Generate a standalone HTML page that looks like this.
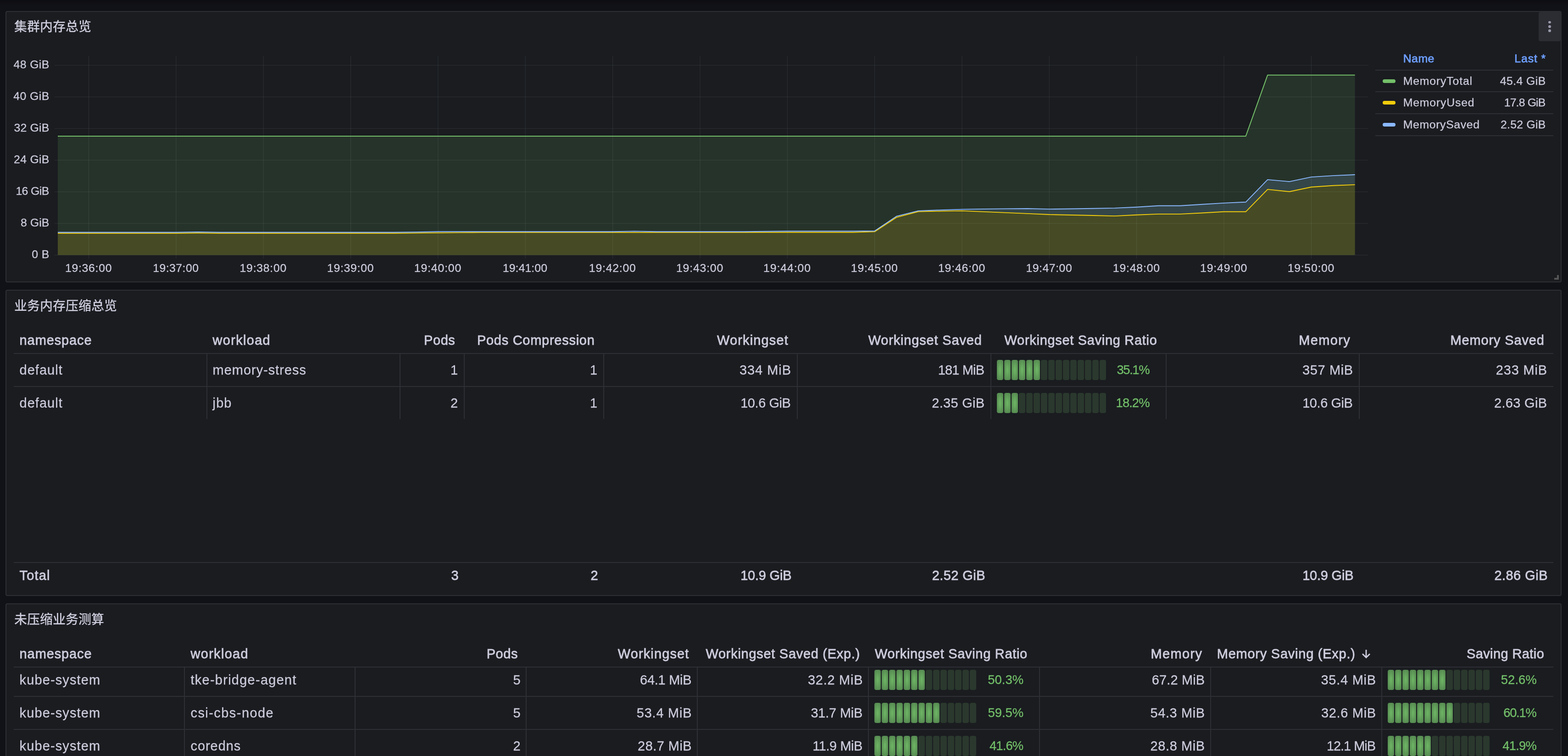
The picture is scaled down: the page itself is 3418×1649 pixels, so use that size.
<!DOCTYPE html><html lang="zh"><head><meta charset="utf-8"><title>Memory compression dashboard</title><style>
html,body{margin:0;padding:0}
body{width:3418px;height:1649px;overflow:hidden;background:#111217;font-family:"Liberation Sans",sans-serif;color:#ccccdc;position:relative}
body:before{content:"";position:absolute;left:0;top:0;width:100%;height:12px;background:linear-gradient(#0d0d12,#111217)}
.panel{position:absolute;box-sizing:border-box;background:#1a1c20;border-radius:4px;box-shadow:inset 0 0 0 2px #2d2f35;overflow:hidden;margin:0;will-change:transform}
.t{position:absolute;white-space:pre;margin:0;font-weight:400;-webkit-text-stroke:.3px currentColor}
.m{-webkit-text-stroke:.8px currentColor}
.ttl{position:absolute;margin:0;padding:0;font-size:28px;font-weight:500}
.ttl svg{display:block}
.chart{position:absolute;left:0;top:0}
.hl,.vl{position:absolute;background:#2d2f35}
.menu{position:absolute;border:0;padding:0;margin:0;background:#2b2d33;border-radius:4px 2px 4px 4px}
.menu i{position:absolute;left:21.2px;width:5.6px;height:5.6px;border-radius:50%;background:#9a9aab}
.sw{position:absolute;width:28px;height:8px;border-radius:4px}
.g{position:absolute;height:44px;display:flex;gap:2px}
.g i{display:block;width:14px;height:44px;border-radius:4px;background:rgba(115,191,105,.18)}
.g i.on{background:radial-gradient(rgba(115,191,105,.92) 10%,rgba(115,191,105,.6))}
</style></head><body>
<section class="panel" style="left:12px;top:24px;width:3392px;height:592px">
<h2 class="ttl" style="left:18.5px;top:19px;width:168px;height:34px" aria-label="集群内存总览"><svg width="168" height="34" viewBox="0 0 168 34" role="img"><title>集群内存总览</title><text x="0" y="25" font-family="'Liberation Sans','Noto Sans CJK SC',sans-serif" font-size="28" font-weight="500" fill="#ccccdc">集群内存总览</text></svg></h2>
<svg class="chart" width="3392" height="592" viewBox="12 24 3392 592" role="img" aria-label="Cluster memory time series"><polygon fill="#73bf69" fill-opacity=".14" points="126.0,297.0 145.9,297.0 193.5,297.0 241.1,297.0 288.7,297.0 336.3,297.0 383.9,297.0 431.4,297.0 479.0,297.0 526.6,297.0 574.2,297.0 621.8,297.0 669.4,297.0 717.0,297.0 764.5,297.0 812.1,297.0 859.7,297.0 907.3,297.0 954.9,297.0 1002.5,297.0 1050.1,297.0 1097.7,297.0 1145.2,297.0 1192.8,297.0 1240.4,297.0 1288.0,297.0 1335.6,297.0 1383.2,297.0 1430.8,297.0 1478.4,297.0 1526.0,297.0 1573.5,297.0 1621.1,297.0 1668.7,297.0 1716.3,297.0 1763.9,297.0 1811.5,297.0 1859.1,297.0 1906.6,297.0 1954.2,297.0 2001.8,297.0 2049.4,297.0 2097.0,297.0 2144.6,297.0 2192.2,297.0 2239.8,297.0 2287.3,297.0 2334.9,297.0 2382.5,297.0 2430.1,297.0 2477.7,297.0 2525.3,297.0 2572.9,297.0 2620.5,297.0 2668.0,297.0 2715.6,297.0 2763.2,163.7 2810.8,163.7 2858.4,163.7 2906.0,163.7 2953.6,163.7 2953.6,556.3 126.0,556.3"/><polygon fill="#f2cc0c" fill-opacity=".155" points="126.0,508.7 145.9,508.7 193.5,508.7 241.1,508.7 288.7,508.7 336.3,508.7 383.9,508.7 431.4,508.2 479.0,508.7 526.6,508.7 574.2,508.7 621.8,508.7 669.4,508.7 717.0,508.7 764.5,508.7 812.1,508.7 859.7,508.7 907.3,508.4 954.9,507.9 1002.5,507.4 1050.1,507.1 1097.7,507.1 1145.2,507.1 1192.8,507.1 1240.4,507.1 1288.0,507.1 1335.6,507.1 1383.2,507.1 1430.8,507.1 1478.4,507.1 1526.0,507.1 1573.5,507.1 1621.1,507.1 1668.7,506.9 1716.3,506.7 1763.9,506.7 1811.5,506.7 1859.1,506.7 1906.6,505.4 1954.2,474.1 2001.8,461.5 2049.4,460.6 2097.0,459.9 2144.6,461.9 2192.2,463.9 2239.8,465.9 2287.3,468.0 2334.9,469.0 2382.5,470.0 2430.1,471.1 2477.7,468.8 2525.3,466.9 2572.9,466.9 2620.5,464.5 2668.0,461.8 2715.6,461.8 2763.2,413.1 2810.8,418.0 2858.4,408.0 2906.0,404.7 2953.6,402.9 2953.6,556.3 126.0,556.3"/><polygon fill="#8ab8ff" fill-opacity=".145" points="126.0,506.8 145.9,506.8 193.5,506.8 241.1,506.8 288.7,506.8 336.3,506.8 383.9,506.8 431.4,506.0 479.0,506.8 526.6,506.8 574.2,506.8 621.8,506.8 669.4,506.8 717.0,506.8 764.5,506.8 812.1,506.8 859.7,506.8 907.3,506.2 954.9,505.2 1002.5,505.2 1050.1,505.2 1097.7,505.2 1145.2,505.2 1192.8,505.2 1240.4,505.2 1288.0,505.2 1335.6,505.2 1383.2,504.4 1430.8,505.2 1478.4,505.2 1526.0,505.2 1573.5,505.2 1621.1,505.2 1668.7,504.7 1716.3,504.3 1763.9,504.3 1811.5,504.3 1859.1,504.3 1906.6,503.7 1954.2,471.7 2001.8,459.9 2049.4,458.2 2097.0,456.6 2144.6,455.9 2192.2,455.4 2239.8,455.0 2287.3,456.1 2334.9,455.5 2382.5,454.7 2430.1,453.9 2477.7,451.8 2525.3,448.7 2572.9,448.7 2620.5,445.8 2668.0,442.9 2715.6,440.8 2763.2,391.9 2810.8,396.1 2858.4,386.1 2906.0,383.1 2953.6,381.0 2953.6,402.9 2906.0,404.7 2858.4,408.0 2810.8,418.0 2763.2,413.1 2715.6,461.8 2668.0,461.8 2620.5,464.5 2572.9,466.9 2525.3,466.9 2477.7,468.8 2430.1,471.1 2382.5,470.0 2334.9,469.0 2287.3,468.0 2239.8,465.9 2192.2,463.9 2144.6,461.9 2097.0,459.9 2049.4,460.6 2001.8,461.5 1954.2,474.1 1906.6,505.4 1859.1,506.7 1811.5,506.7 1763.9,506.7 1716.3,506.7 1668.7,506.9 1621.1,507.1 1573.5,507.1 1526.0,507.1 1478.4,507.1 1430.8,507.1 1383.2,507.1 1335.6,507.1 1288.0,507.1 1240.4,507.1 1192.8,507.1 1145.2,507.1 1097.7,507.1 1050.1,507.1 1002.5,507.4 954.9,507.9 907.3,508.4 859.7,508.7 812.1,508.7 764.5,508.7 717.0,508.7 669.4,508.7 621.8,508.7 574.2,508.7 526.6,508.7 479.0,508.7 431.4,508.2 383.9,508.7 336.3,508.7 288.7,508.7 241.1,508.7 193.5,508.7 145.9,508.7 126.0,508.7"/><path d="M118.4 142.3H2982.5M118.4 211.3H2982.5M118.4 280.3H2982.5M118.4 349.3H2982.5M118.4 418.3H2982.5M118.4 487.3H2982.5M118.4 556.3H2982.5M193.5 122.2V564.2M383.9 122.2V564.2M574.2 122.2V564.2M764.5 122.2V564.2M954.9 122.2V564.2M1145.2 122.2V564.2M1335.6 122.2V564.2M1526.0 122.2V564.2M1716.3 122.2V564.2M1906.6 122.2V564.2M2097.0 122.2V564.2M2287.3 122.2V564.2M2477.7 122.2V564.2M2668.0 122.2V564.2M2858.4 122.2V564.2" stroke="rgba(240,250,255,.09)" stroke-width="1" fill="none"/><polyline fill="none" stroke="#73bf69" stroke-width="2" stroke-linejoin="round" points="126.0,297.0 145.9,297.0 193.5,297.0 241.1,297.0 288.7,297.0 336.3,297.0 383.9,297.0 431.4,297.0 479.0,297.0 526.6,297.0 574.2,297.0 621.8,297.0 669.4,297.0 717.0,297.0 764.5,297.0 812.1,297.0 859.7,297.0 907.3,297.0 954.9,297.0 1002.5,297.0 1050.1,297.0 1097.7,297.0 1145.2,297.0 1192.8,297.0 1240.4,297.0 1288.0,297.0 1335.6,297.0 1383.2,297.0 1430.8,297.0 1478.4,297.0 1526.0,297.0 1573.5,297.0 1621.1,297.0 1668.7,297.0 1716.3,297.0 1763.9,297.0 1811.5,297.0 1859.1,297.0 1906.6,297.0 1954.2,297.0 2001.8,297.0 2049.4,297.0 2097.0,297.0 2144.6,297.0 2192.2,297.0 2239.8,297.0 2287.3,297.0 2334.9,297.0 2382.5,297.0 2430.1,297.0 2477.7,297.0 2525.3,297.0 2572.9,297.0 2620.5,297.0 2668.0,297.0 2715.6,297.0 2763.2,163.7 2810.8,163.7 2858.4,163.7 2906.0,163.7 2953.6,163.7"/><polyline fill="none" stroke="#f2cc0c" stroke-width="1.9" stroke-linejoin="round" points="126.0,508.7 145.9,508.7 193.5,508.7 241.1,508.7 288.7,508.7 336.3,508.7 383.9,508.7 431.4,508.2 479.0,508.7 526.6,508.7 574.2,508.7 621.8,508.7 669.4,508.7 717.0,508.7 764.5,508.7 812.1,508.7 859.7,508.7 907.3,508.4 954.9,507.9 1002.5,507.4 1050.1,507.1 1097.7,507.1 1145.2,507.1 1192.8,507.1 1240.4,507.1 1288.0,507.1 1335.6,507.1 1383.2,507.1 1430.8,507.1 1478.4,507.1 1526.0,507.1 1573.5,507.1 1621.1,507.1 1668.7,506.9 1716.3,506.7 1763.9,506.7 1811.5,506.7 1859.1,506.7 1906.6,505.4 1954.2,474.1 2001.8,461.5 2049.4,460.6 2097.0,459.9 2144.6,461.9 2192.2,463.9 2239.8,465.9 2287.3,468.0 2334.9,469.0 2382.5,470.0 2430.1,471.1 2477.7,468.8 2525.3,466.9 2572.9,466.9 2620.5,464.5 2668.0,461.8 2715.6,461.8 2763.2,413.1 2810.8,418.0 2858.4,408.0 2906.0,404.7 2953.6,402.9"/><polyline fill="none" stroke="#8ab8ff" stroke-width="1.9" stroke-linejoin="round" points="126.0,506.8 145.9,506.8 193.5,506.8 241.1,506.8 288.7,506.8 336.3,506.8 383.9,506.8 431.4,506.0 479.0,506.8 526.6,506.8 574.2,506.8 621.8,506.8 669.4,506.8 717.0,506.8 764.5,506.8 812.1,506.8 859.7,506.8 907.3,506.2 954.9,505.2 1002.5,505.2 1050.1,505.2 1097.7,505.2 1145.2,505.2 1192.8,505.2 1240.4,505.2 1288.0,505.2 1335.6,505.2 1383.2,504.4 1430.8,505.2 1478.4,505.2 1526.0,505.2 1573.5,505.2 1621.1,505.2 1668.7,504.7 1716.3,504.3 1763.9,504.3 1811.5,504.3 1859.1,504.3 1906.6,503.7 1954.2,471.7 2001.8,459.9 2049.4,458.2 2097.0,456.6 2144.6,455.9 2192.2,455.4 2239.8,455.0 2287.3,456.1 2334.9,455.5 2382.5,454.7 2430.1,453.9 2477.7,451.8 2525.3,448.7 2572.9,448.7 2620.5,445.8 2668.0,442.9 2715.6,440.8 2763.2,391.9 2810.8,396.1 2858.4,386.1 2906.0,383.1 2953.6,381.0"/></svg>
<button class="menu" aria-label="Menu" style="left:3342px;top:2px;width:48px;height:64px"><i style="top:19.7px"></i><i style="top:29.1px"></i><i style="top:38.4px"></i></button>
<span class="t" style="top:104.5px;font-size:24.84px;line-height:24.84px;letter-spacing:0.359px;left:17.6px;">48 GiB</span>
<span class="t" style="top:173.5px;font-size:24.84px;line-height:24.84px;letter-spacing:0.410px;left:17.3px;">40 GiB</span>
<span class="t" style="top:242.5px;font-size:24.84px;line-height:24.84px;letter-spacing:0.208px;left:18.4px;">32 GiB</span>
<span class="t" style="top:311.5px;font-size:24.84px;line-height:24.84px;letter-spacing:0.258px;left:18.1px;">24 GiB</span>
<span class="t" style="top:380.5px;font-size:24.84px;line-height:24.84px;letter-spacing:-0.610px;left:22.4px;">16 GiB</span>
<span class="t" style="top:449.5px;font-size:24.84px;line-height:24.84px;letter-spacing:0.028px;left:33.1px;">8 GiB</span>
<span class="t" style="top:518.5px;font-size:24.84px;line-height:24.84px;letter-spacing:0.355px;left:57.3px;">0 B</span>
<span class="t" style="top:549.0px;font-size:24.84px;line-height:24.84px;letter-spacing:0.719px;left:129.9px;">19:36:00</span>
<span class="t" style="top:549.0px;font-size:24.84px;line-height:24.84px;letter-spacing:0.445px;left:321.2px;">19:37:00</span>
<span class="t" style="top:549.0px;font-size:24.84px;line-height:24.84px;letter-spacing:0.715px;left:510.6px;">19:38:00</span>
<span class="t" style="top:549.0px;font-size:24.84px;line-height:24.84px;letter-spacing:0.719px;left:700.9px;">19:39:00</span>
<span class="t" style="top:549.0px;font-size:24.84px;line-height:24.84px;letter-spacing:0.841px;left:890.8px;">19:40:00</span>
<span class="t" style="top:549.0px;font-size:24.84px;line-height:24.84px;letter-spacing:0.081px;left:1083.8px;">19:41:00</span>
<span class="t" style="top:549.0px;font-size:24.84px;line-height:24.84px;letter-spacing:0.776px;left:1271.8px;">19:42:00</span>
<span class="t" style="top:549.0px;font-size:24.84px;line-height:24.84px;letter-spacing:0.800px;left:1462.0px;">19:43:00</span>
<span class="t" style="top:549.0px;font-size:24.84px;line-height:24.84px;letter-spacing:0.888px;left:1652.1px;">19:44:00</span>
<span class="t" style="top:549.0px;font-size:24.84px;line-height:24.84px;letter-spacing:0.770px;left:1842.8px;">19:45:00</span>
<span class="t" style="top:549.0px;font-size:24.84px;line-height:24.84px;letter-spacing:0.806px;left:2033.0px;">19:46:00</span>
<span class="t" style="top:549.0px;font-size:24.84px;line-height:24.84px;letter-spacing:0.532px;left:2224.4px;">19:47:00</span>
<span class="t" style="top:549.0px;font-size:24.84px;line-height:24.84px;letter-spacing:0.802px;left:2413.8px;">19:48:00</span>
<span class="t" style="top:549.0px;font-size:24.84px;line-height:24.84px;letter-spacing:0.806px;left:2604.1px;">19:49:00</span>
<span class="t" style="top:549.0px;font-size:24.84px;line-height:24.84px;letter-spacing:0.721px;left:2794.7px;">19:50:00</span>
<span class="t m" style="top:92.4px;font-size:24.84px;line-height:24.84px;letter-spacing:0.499px;left:3046.7px;color:#6e9fff;">Name</span>
<span class="t m" style="top:92.4px;font-size:24.84px;line-height:24.84px;letter-spacing:0.871px;left:3289.3px;color:#6e9fff;">Last *</span>
<span class="t" style="top:140.6px;font-size:24.84px;line-height:24.84px;letter-spacing:0.834px;left:3046.7px;">MemoryTotal</span>
<span class="t" style="top:140.6px;font-size:24.84px;line-height:24.84px;letter-spacing:0.436px;left:3257.7px;">45.4 GiB</span>
<span class="t" style="top:188.0px;font-size:24.84px;line-height:24.84px;letter-spacing:0.815px;left:3046.7px;">MemoryUsed</span>
<span class="t" style="top:188.0px;font-size:24.84px;line-height:24.84px;letter-spacing:-0.851px;left:3266.7px;">17.8 GiB</span>
<span class="t" style="top:235.7px;font-size:24.84px;line-height:24.84px;letter-spacing:0.635px;left:3046.7px;">MemorySaved</span>
<span class="t" style="top:235.7px;font-size:24.84px;line-height:24.84px;letter-spacing:0.257px;left:3259.0px;">2.52 GiB</span>
<div class="hl" style="left:2986.0px;top:127.9px;width:387.6px;height:2px"></div>
<div class="hl" style="left:2986.0px;top:174.7px;width:387.6px;height:2px"></div>
<div class="hl" style="left:2986.0px;top:222.6px;width:387.6px;height:2px"></div>
<div class="hl" style="left:2986.0px;top:271.0px;width:387.6px;height:2px"></div>
<i class="sw" style="left:3001.6px;top:149.0px;background:#73bf69"></i>
<i class="sw" style="left:3001.6px;top:196.4px;background:#f2cc0c"></i>
<i class="sw" style="left:3001.6px;top:244.1px;background:#8ab8ff"></i>
<svg style="position:absolute;left:3374px;top:574px" width="14" height="14" viewBox="3386 598 14 14" aria-hidden="true"><path d="M3394 600h4v10h-10v-4h6z" fill="#555"/></svg>
</section>
<section class="panel" style="left:12px;top:632px;width:3392px;height:668px">
<h2 class="ttl" style="left:18.5px;top:19.5px;width:224px;height:34px" aria-label="业务内存压缩总览"><svg width="224" height="34" viewBox="0 0 224 34" role="img"><title>业务内存压缩总览</title><text x="0" y="25" font-family="'Liberation Sans','Noto Sans CJK SC',sans-serif" font-size="28" font-weight="500" fill="#ccccdc">业务内存压缩总览</text></svg></h2>
<div class="hl" style="left:18.0px;top:138.0px;width:3356.0px;height:2px"></div>
<div class="hl" style="left:18.0px;top:210.0px;width:3356.0px;height:2px"></div>
<div class="hl" style="left:18.0px;top:593.6px;width:3356.0px;height:2px"></div>
<div class="vl" style="left:438.0px;top:140.0px;width:2px;height:142.0px"></div>
<div class="vl" style="left:859.0px;top:140.0px;width:2px;height:142.0px"></div>
<div class="vl" style="left:999.0px;top:140.0px;width:2px;height:142.0px"></div>
<div class="vl" style="left:1303.0px;top:140.0px;width:2px;height:142.0px"></div>
<div class="vl" style="left:1725.0px;top:140.0px;width:2px;height:142.0px"></div>
<div class="vl" style="left:2147.0px;top:140.0px;width:2px;height:142.0px"></div>
<div class="vl" style="left:2529.0px;top:140.0px;width:2px;height:142.0px"></div>
<div class="vl" style="left:2950.0px;top:140.0px;width:2px;height:142.0px"></div>
<div class="g" style="left:2161.0px;top:153.3px" role="meter"><i class="on"></i><i class="on"></i><i class="on"></i><i class="on"></i><i class="on"></i><i class="on"></i><i></i><i></i><i></i><i></i><i></i><i></i><i></i><i></i><i></i></div>
<div class="g" style="left:2161.0px;top:225.3px" role="meter"><i class="on"></i><i class="on"></i><i class="on"></i><i></i><i></i><i></i><i></i><i></i><i></i><i></i><i></i><i></i><i></i><i></i><i></i></div>
<span class="t m" style="top:95.7px;font-size:28.98px;line-height:28.98px;letter-spacing:0.906px;left:30.6px;">namespace</span>
<span class="t m" style="top:95.7px;font-size:28.98px;line-height:28.98px;letter-spacing:1.311px;left:451.6px;">workload</span>
<span class="t m" style="top:95.7px;font-size:28.98px;line-height:28.98px;letter-spacing:0.565px;left:912.1px;">Pods</span>
<span class="t m" style="top:95.7px;font-size:28.98px;line-height:28.98px;letter-spacing:0.746px;left:1027.9px;">Pods Compression</span>
<span class="t m" style="top:95.7px;font-size:28.98px;line-height:28.98px;letter-spacing:1.143px;left:1551.1px;">Workingset</span>
<span class="t m" style="top:95.7px;font-size:28.98px;line-height:28.98px;letter-spacing:0.836px;left:1880.7px;">Workingset Saved</span>
<span class="t m" style="top:95.7px;font-size:28.98px;line-height:28.98px;letter-spacing:0.707px;left:2177.6px;">Workingset Saving Ratio</span>
<span class="t m" style="top:95.7px;font-size:28.98px;line-height:28.98px;letter-spacing:1.388px;left:2819.2px;">Memory</span>
<span class="t m" style="top:95.7px;font-size:28.98px;line-height:28.98px;letter-spacing:0.856px;left:3149.6px;">Memory Saved</span>
<span class="t" style="top:160.9px;font-size:28.98px;line-height:28.98px;letter-spacing:1.021px;left:30.6px;">default</span>
<span class="t" style="top:160.9px;font-size:28.98px;line-height:28.98px;letter-spacing:0.994px;left:451.6px;">memory-stress</span>
<span class="t" style="top:160.9px;font-size:28.98px;line-height:28.98px;letter-spacing:-4.435px;left:969.9px;">1</span>
<span class="t" style="top:160.9px;font-size:28.98px;line-height:28.98px;letter-spacing:-4.435px;left:1273.9px;">1</span>
<span class="t" style="top:160.9px;font-size:28.98px;line-height:28.98px;letter-spacing:0.967px;left:1599.9px;">334 MiB</span>
<span class="t" style="top:160.9px;font-size:28.98px;line-height:28.98px;letter-spacing:-0.830px;left:2032.7px;">181 MiB</span>
<span class="t" style="top:160.8px;font-size:27.43px;line-height:27.43px;letter-spacing:-1.425px;left:2422.5px;color:#73bf69;">35.1%</span>
<span class="t" style="top:160.9px;font-size:28.98px;line-height:28.98px;letter-spacing:0.608px;left:2827.1px;">357 MiB</span>
<span class="t" style="top:160.9px;font-size:28.98px;line-height:28.98px;letter-spacing:0.822px;left:3248.8px;">233 MiB</span>
<span class="t" style="top:232.9px;font-size:28.98px;line-height:28.98px;letter-spacing:1.021px;left:30.6px;">default</span>
<span class="t" style="top:232.9px;font-size:28.98px;line-height:28.98px;letter-spacing:1.102px;left:451.6px;">jbb</span>
<span class="t" style="top:232.9px;font-size:28.98px;line-height:28.98px;letter-spacing:1.253px;left:969.9px;">2</span>
<span class="t" style="top:232.9px;font-size:28.98px;line-height:28.98px;letter-spacing:-4.435px;left:1273.9px;">1</span>
<span class="t" style="top:232.9px;font-size:28.98px;line-height:28.98px;letter-spacing:-0.425px;left:1602.2px;">10.6 GiB</span>
<span class="t" style="top:232.9px;font-size:28.98px;line-height:28.98px;letter-spacing:0.280px;left:2019.3px;">2.35 GiB</span>
<span class="t" style="top:232.8px;font-size:27.43px;line-height:27.43px;letter-spacing:-0.950px;left:2420.6px;color:#73bf69;">18.2%</span>
<span class="t" style="top:232.9px;font-size:28.98px;line-height:28.98px;letter-spacing:-0.425px;left:2827.2px;">10.6 GiB</span>
<span class="t" style="top:232.9px;font-size:28.98px;line-height:28.98px;letter-spacing:0.329px;left:3245.0px;">2.63 GiB</span>
<span class="t m" style="top:609.1px;font-size:28.98px;line-height:28.98px;letter-spacing:1.184px;left:30.6px;">Total</span>
<span class="t m" style="top:609.1px;font-size:28.98px;line-height:28.98px;letter-spacing:1.737px;left:971.4px;">3</span>
<span class="t m" style="top:609.1px;font-size:28.98px;line-height:28.98px;letter-spacing:1.440px;left:1275.4px;">2</span>
<span class="t m" style="top:609.1px;font-size:28.98px;line-height:28.98px;letter-spacing:-0.208px;left:1602.2px;">10.9 GiB</span>
<span class="t m" style="top:609.1px;font-size:28.98px;line-height:28.98px;letter-spacing:0.436px;left:2019.7px;">2.52 GiB</span>
<span class="t m" style="top:609.1px;font-size:28.98px;line-height:28.98px;letter-spacing:-0.208px;left:2827.2px;">10.9 GiB</span>
<span class="t m" style="top:609.1px;font-size:28.98px;line-height:28.98px;letter-spacing:0.479px;left:3245.4px;">2.86 GiB</span>
</section>
<section class="panel" style="left:12px;top:1316px;width:3392px;height:340px;border-radius:4px 4px 0 0">
<h2 class="ttl" style="left:18.5px;top:19.5px;width:196px;height:34px" aria-label="未压缩业务测算"><svg width="196" height="34" viewBox="0 0 196 34" role="img"><title>未压缩业务测算</title><text x="0" y="25" font-family="'Liberation Sans','Noto Sans CJK SC',sans-serif" font-size="28" font-weight="500" fill="#ccccdc">未压缩业务测算</text></svg></h2>
<div class="hl" style="left:18.0px;top:138.3px;width:3356.0px;height:2px"></div>
<div class="hl" style="left:18.0px;top:202.0px;width:3356.0px;height:2px"></div>
<div class="hl" style="left:18.0px;top:274.0px;width:3356.0px;height:2px"></div>
<div class="vl" style="left:388.5px;top:140.0px;width:2px;height:193.0px"></div>
<div class="vl" style="left:761.4px;top:140.0px;width:2px;height:193.0px"></div>
<div class="vl" style="left:1134.3px;top:140.0px;width:2px;height:193.0px"></div>
<div class="vl" style="left:1507.2px;top:140.0px;width:2px;height:193.0px"></div>
<div class="vl" style="left:1880.0px;top:140.0px;width:2px;height:193.0px"></div>
<div class="vl" style="left:2252.9px;top:140.0px;width:2px;height:193.0px"></div>
<div class="vl" style="left:2625.8px;top:140.0px;width:2px;height:193.0px"></div>
<div class="vl" style="left:2998.7px;top:140.0px;width:2px;height:193.0px"></div>
<div class="g" style="left:1894.4px;top:144.7px" role="meter"><i class="on"></i><i class="on"></i><i class="on"></i><i class="on"></i><i class="on"></i><i class="on"></i><i class="on"></i><i></i><i></i><i></i><i></i><i></i><i></i><i></i></div>
<div class="g" style="left:3013.1px;top:144.7px" role="meter"><i class="on"></i><i class="on"></i><i class="on"></i><i class="on"></i><i class="on"></i><i class="on"></i><i class="on"></i><i class="on"></i><i></i><i></i><i></i><i></i><i></i><i></i></div>
<div class="g" style="left:1894.4px;top:216.7px" role="meter"><i class="on"></i><i class="on"></i><i class="on"></i><i class="on"></i><i class="on"></i><i class="on"></i><i class="on"></i><i class="on"></i><i class="on"></i><i></i><i></i><i></i><i></i><i></i></div>
<div class="g" style="left:3013.1px;top:216.7px" role="meter"><i class="on"></i><i class="on"></i><i class="on"></i><i class="on"></i><i class="on"></i><i class="on"></i><i class="on"></i><i class="on"></i><i class="on"></i><i></i><i></i><i></i><i></i><i></i></div>
<div class="g" style="left:1894.4px;top:288.7px" role="meter"><i class="on"></i><i class="on"></i><i class="on"></i><i class="on"></i><i class="on"></i><i class="on"></i><i></i><i></i><i></i><i></i><i></i><i></i><i></i><i></i></div>
<div class="g" style="left:3013.1px;top:288.7px" role="meter"><i class="on"></i><i class="on"></i><i class="on"></i><i class="on"></i><i class="on"></i><i class="on"></i><i></i><i></i><i></i><i></i><i></i><i></i><i></i><i></i></div>
<span class="t m" style="top:96.0px;font-size:28.98px;line-height:28.98px;letter-spacing:0.906px;left:30.6px;">namespace</span>
<span class="t m" style="top:96.0px;font-size:28.98px;line-height:28.98px;letter-spacing:1.311px;left:403.5px;">workload</span>
<span class="t m" style="top:96.0px;font-size:28.98px;line-height:28.98px;letter-spacing:0.565px;left:1048.7px;">Pods</span>
<span class="t m" style="top:96.0px;font-size:28.98px;line-height:28.98px;letter-spacing:1.143px;left:1334.7px;">Workingset</span>
<span class="t m" style="top:96.0px;font-size:28.98px;line-height:28.98px;letter-spacing:0.721px;left:1526.5px;">Workingset Saved (Exp.)</span>
<span class="t m" style="top:96.0px;font-size:28.98px;line-height:28.98px;letter-spacing:0.707px;left:1895.0px;">Workingset Saving Ratio</span>
<span class="t m" style="top:96.0px;font-size:28.98px;line-height:28.98px;letter-spacing:1.388px;left:2496.5px;">Memory</span>
<span class="t m" style="top:96.0px;font-size:28.98px;line-height:28.98px;letter-spacing:0.767px;left:2640.8px;">Memory Saving (Exp.)</span>
<span class="t m" style="top:96.0px;font-size:28.98px;line-height:28.98px;letter-spacing:0.425px;left:3184.9px;">Saving Ratio</span>
<span class="t" style="top:152.9px;font-size:28.98px;line-height:28.98px;letter-spacing:1.126px;left:30.6px;">kube-system</span>
<span class="t" style="top:152.9px;font-size:28.98px;line-height:28.98px;letter-spacing:1.267px;left:403.5px;">tke-bridge-agent</span>
<span class="t" style="top:152.9px;font-size:28.98px;line-height:28.98px;letter-spacing:1.206px;left:1106.5px;">5</span>
<span class="t" style="top:152.9px;font-size:28.98px;line-height:28.98px;letter-spacing:-0.265px;left:1383.1px;">64.1 MiB</span>
<span class="t" style="top:152.9px;font-size:28.98px;line-height:28.98px;letter-spacing:0.733px;left:1749.0px;">32.2 MiB</span>
<span class="t" style="top:152.8px;font-size:27.43px;line-height:27.43px;letter-spacing:0.017px;left:2141.3px;color:#73bf69;">50.3%</span>
<span class="t" style="top:152.9px;font-size:28.98px;line-height:28.98px;letter-spacing:0.149px;left:2498.8px;">67.2 MiB</span>
<span class="t" style="top:152.9px;font-size:28.98px;line-height:28.98px;letter-spacing:0.759px;left:2867.5px;">35.4 MiB</span>
<span class="t" style="top:152.8px;font-size:27.43px;line-height:27.43px;letter-spacing:0.059px;left:3259.8px;color:#73bf69;">52.6%</span>
<span class="t" style="top:224.9px;font-size:28.98px;line-height:28.98px;letter-spacing:1.126px;left:30.6px;">kube-system</span>
<span class="t" style="top:224.9px;font-size:28.98px;line-height:28.98px;letter-spacing:1.451px;left:403.5px;">csi-cbs-node</span>
<span class="t" style="top:224.9px;font-size:28.98px;line-height:28.98px;letter-spacing:1.206px;left:1106.5px;">5</span>
<span class="t" style="top:224.9px;font-size:28.98px;line-height:28.98px;letter-spacing:0.774px;left:1375.8px;">53.4 MiB</span>
<span class="t" style="top:224.9px;font-size:28.98px;line-height:28.98px;letter-spacing:-0.183px;left:1755.4px;">31.7 MiB</span>
<span class="t" style="top:224.8px;font-size:27.43px;line-height:27.43px;letter-spacing:-0.022px;left:2141.5px;color:#73bf69;">59.5%</span>
<span class="t" style="top:224.9px;font-size:28.98px;line-height:28.98px;letter-spacing:0.639px;left:2495.4px;">54.3 MiB</span>
<span class="t" style="top:224.9px;font-size:28.98px;line-height:28.98px;letter-spacing:0.679px;left:2868.0px;">32.6 MiB</span>
<span class="t" style="top:224.8px;font-size:27.43px;line-height:27.43px;letter-spacing:-1.290px;left:3265.2px;color:#73bf69;">60.1%</span>
<span class="t" style="top:296.9px;font-size:28.98px;line-height:28.98px;letter-spacing:1.126px;left:30.6px;">kube-system</span>
<span class="t" style="top:296.9px;font-size:28.98px;line-height:28.98px;letter-spacing:0.956px;left:403.5px;">coredns</span>
<span class="t" style="top:296.9px;font-size:28.98px;line-height:28.98px;letter-spacing:1.253px;left:1106.5px;">2</span>
<span class="t" style="top:296.9px;font-size:28.98px;line-height:28.98px;letter-spacing:0.454px;left:1378.1px;">28.7 MiB</span>
<span class="t" style="top:296.9px;font-size:28.98px;line-height:28.98px;letter-spacing:-0.435px;left:1759.3px;">11.9 MiB</span>
<span class="t" style="top:296.8px;font-size:27.43px;line-height:27.43px;letter-spacing:-0.876px;left:2144.9px;color:#73bf69;">41.6%</span>
<span class="t" style="top:296.9px;font-size:28.98px;line-height:28.98px;letter-spacing:0.610px;left:2495.6px;">28.8 MiB</span>
<span class="t" style="top:296.9px;font-size:28.98px;line-height:28.98px;letter-spacing:-1.019px;left:2879.9px;">12.1 MiB</span>
<span class="t" style="top:296.8px;font-size:27.43px;line-height:27.43px;letter-spacing:-0.780px;left:3263.2px;color:#73bf69;">41.9%</span>
<svg style="position:absolute;left:2954px;top:98px" width="24" height="24" viewBox="2966 1414 24 24" role="img" aria-label="sorted descending"><path d="M2978 1417.2V1433.6M2970 1426.2L2978 1434.2L2986 1426.2" fill="none" stroke="#ccccdc" stroke-width="2.9"/></svg>
</section>
</body></html>
